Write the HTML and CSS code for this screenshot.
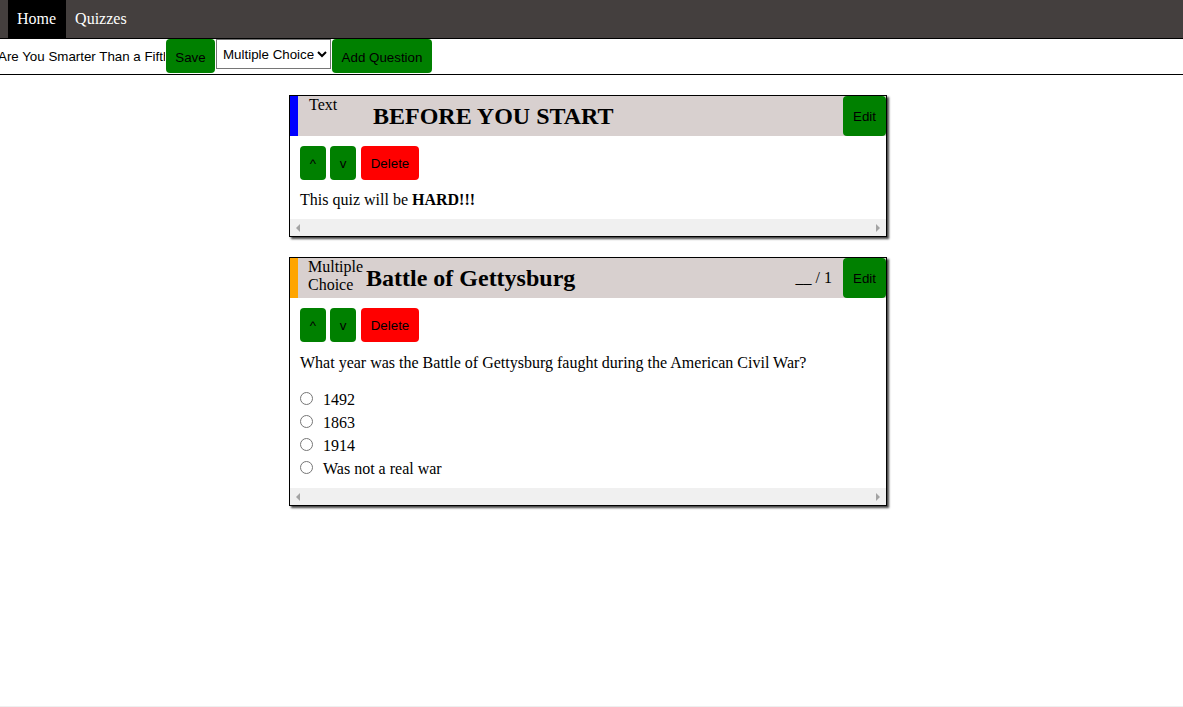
FILE: index.html
```html
<!DOCTYPE html>
<html>
<head>
<meta charset="utf-8">
<link rel="stylesheet" href="styles.css">
</head>
<body>
<nav class="topnav">
  <a class="tab tab-active">Home</a>
  <a class="tab">Quizzes</a>
</nav>
<div class="toolbar">
  <input class="quiz-name" type="text" value="Are You Smarter Than a Fifth Grader?">
  <button class="btn btn-green tb-btn tb-save">Save</button>
  <select class="type-select"><option>Multiple Choice</option><option>Text</option></select>
  <button class="btn btn-green tb-btn tb-add">Add Question</button>
</div>
<main class="questions">
  <section class="card">
    <header class="card-head">
      <span class="bar bar-blue"></span>
      <span class="kind kind-text">Text</span>
      <h2 class="title title-text">BEFORE YOU START</h2>
      <span class="spacer"></span>
      <button class="btn btn-green edit">Edit</button>
    </header>
    <div class="card-body">
      <div class="controls">
        <button class="btn btn-green sq">^</button>
        <button class="btn btn-green sq">v</button>
        <button class="btn btn-red del">Delete</button>
      </div>
      <p class="text">This quiz will be <b>HARD!!!</b></p>
    </div>
    <div class="hscroll"><span class="arr arr-l"></span><span class="arr arr-r"></span></div>
  </section>

  <section class="card">
    <header class="card-head">
      <span class="bar bar-orange"></span>
      <span class="kind kind-mc">Multiple Choice</span>
      <h2 class="title title-mc">Battle of Gettysburg</h2>
      <span class="spacer"></span>
      <span class="score">__ / 1</span>
      <button class="btn btn-green edit">Edit</button>
    </header>
    <div class="card-body card-body-mc">
      <div class="controls">
        <button class="btn btn-green sq">^</button>
        <button class="btn btn-green sq">v</button>
        <button class="btn btn-red del">Delete</button>
      </div>
      <p class="text text-q">What year was the Battle of Gettysburg faught during the American Civil War?</p>
      <ul class="options">
        <li class="option"><input type="radio" name="q2"><span>1492</span></li>
        <li class="option"><input type="radio" name="q2"><span>1863</span></li>
        <li class="option"><input type="radio" name="q2"><span>1914</span></li>
        <li class="option"><input type="radio" name="q2"><span>Was not a real war</span></li>
      </ul>
    </div>
    <div class="hscroll"><span class="arr arr-l"></span><span class="arr arr-r"></span></div>
  </section>
</main>
</body>
</html>
```
FILE: styles.css
```css
html, body {
  margin: 0;
  padding: 0;
}
body {
  font-family: "Liberation Serif", "Times New Roman", serif;
  font-size: 16px;
  color: #000;
  background: #fff;
  min-height: 707px;
  box-sizing: border-box;
  border-bottom: 1px solid #efefef;
  overflow: hidden;
}

.topnav {
  display: flex;
  height: 38px;
  padding-left: 8px;
  background: #443f3e;
}
.tab {
  display: flex;
  align-items: center;
  padding: 0 10px 1px 9px;
  color: #fff;
  font-size: 16px;
  text-decoration: none;
}
.tab-active {
  background: #000;
}

.toolbar {
  display: flex;
  align-items: flex-start;
  gap: 1px;
  height: 35px;
  border-top: 1px solid #000;
  border-bottom: 1px solid #000;
  box-sizing: content-box;
}
.quiz-name {
  width: 168px;
  height: 34px;
  margin: 0 0 0 -3px;
  padding: 0 0 0 1px;
  border: none;
  outline: none;
  font-family: "Liberation Sans", Arial, sans-serif;
  font-size: 13.33px;
  color: #000;
  background: #fff;
  box-sizing: border-box;
}
.btn {
  border: none;
  border-radius: 4px;
  font-family: "Liberation Sans", Arial, sans-serif;
  font-size: 13.33px;
  color: #000;
  padding: 0 10px;
  cursor: pointer;
}
.btn-green { background: #008000; }
.btn-red { background: #ff0000; }
.tb-btn {
  height: 34px;
  padding: 2px 0 0;
  flex: none;
}
.tb-save { width: 49px; }
.tb-add { width: 100px; }
.type-select {
  height: 30px;
  width: 115px;
  flex: none;
  margin-top: 0;
  font-family: "Liberation Sans", Arial, sans-serif;
  font-size: 13.33px;
  color: #000;
  background: #fff;
  border: 1px solid #767676;
  border-radius: 0;
  padding: 0 0 0 2px;
}

.questions {
  display: flex;
  flex-direction: column;
  align-items: center;
  gap: 20px;
  padding: 20px 7px 0 0;
}
.card {
  width: 596px;
  border: 1px solid #000;
  box-shadow: 2px 2px 2px #444;
  background: #fff;
}
.card-head {
  display: flex;
  align-items: center;
  height: 40px;
  background: #d8d0cf;
}
.bar {
  align-self: stretch;
  width: 8px;
  flex: none;
}
.bar-blue { background: #0000ff; }
.bar-orange { background: #ffa500; }
.kind {
  align-self: flex-start;
  width: 56px;
  flex: none;
  line-height: 18px;
}
.kind-text { margin-left: 11px; }
.kind-mc { margin-left: 10px; }
.title {
  margin: 0;
  font-size: 24px;
  font-weight: bold;
  line-height: 28px;
}
.title-text { margin-left: 8px; }
.title-mc { margin-left: 2px; }
.spacer { flex: 1; }
.score {
  margin-right: 11px;
}
.edit {
  align-self: stretch;
  width: 43px;
  padding: 0;
  flex: none;
}

.card-body {
  padding: 10px 10px 10px;
}
.card-body-mc {
  padding-bottom: 8px;
}
.controls {
  display: flex;
  gap: 4px;
}
.sq {
  width: 26px;
  height: 34px;
  padding: 0;
}
.del {
  height: 34px;
  width: 58px;
  padding: 0;
  margin-left: 1px;
}
.text {
  margin: 11px 0 0;
  line-height: 18px;
}
.text-q {
  margin-top: 12px;
}
.options {
  list-style: none;
  margin: 16px 0 0;
  padding: 0;
  display: flex;
  flex-direction: column;
}
.option {
  display: flex;
  align-items: center;
  height: 23px;
}
.option input {
  margin: 0 10px 2px 0;
  width: 13px;
  height: 13px;
}

.hscroll {
  display: flex;
  align-items: center;
  justify-content: space-between;
  height: 17px;
  background: #f0f0f0;
  padding: 0 6px;
}
.arr {
  width: 0;
  height: 0;
  border-top: 4px solid transparent;
  border-bottom: 4px solid transparent;
}
.arr-l { border-right: 4px solid #a3a3a3; }
.arr-r { border-left: 4px solid #a3a3a3; }
```
